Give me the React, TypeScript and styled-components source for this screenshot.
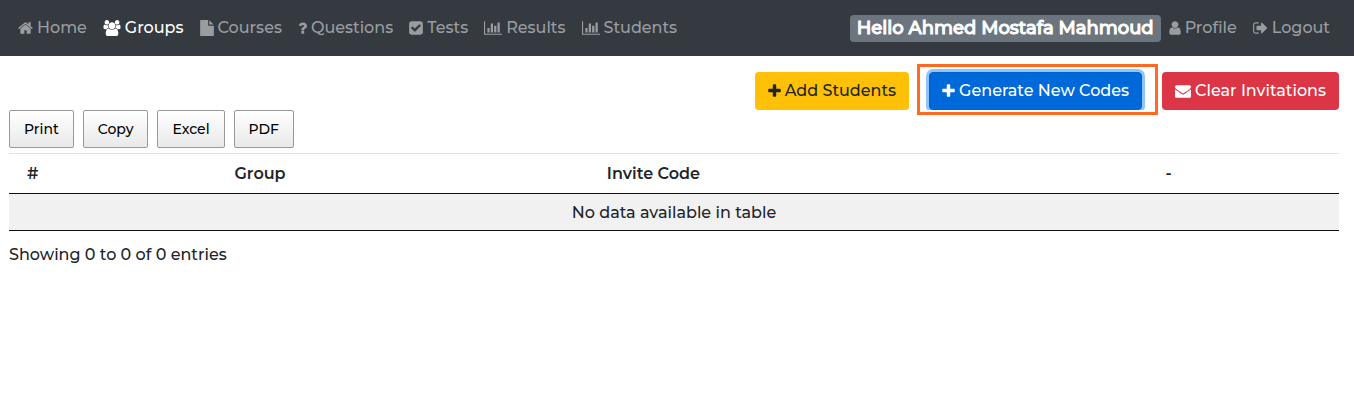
import React from "react";
import styled, { createGlobalStyle, css } from "styled-components";

const GlobalStyle = createGlobalStyle`
  *, *::before, *::after { box-sizing: border-box; }
  body {
    margin: 0;
    background: #fff;
    color: #212529;
    font: 500 16px/24px Montserrat, Inter, "Liberation Sans", sans-serif;
  }
  button { font-family: inherit; cursor: pointer; }
`;

type Glyph = { box: string; width: number; d: string };

const glyphs = {
  home: {
    box: "64 0 1664 1792",
    width: 15,
    d: "M1472 992v480q0 26-19 45t-45 19h-384v-384h-256v384h-384q-26 0-45-19t-19-45v-480q0-1 .5-3t.5-3l575-474 575 474q1 2 1 6zm223-69l-62 74q-8 9-21 11h-3q-13 0-21-7l-692-577-692 577q-12 8-24 7-13-2-21-11l-62-74q-8-10-7-23.5t11-21.5l719-599q32-26 76-26t76 26l244 204v-195q0-14 9-23t23-9h192q14 0 23 9t9 23v408l219 182q10 8 11 21.5t-7 23.5z",
  },
  group: {
    box: "0 0 1920 1792",
    width: 18,
    d: "M593 896q-162 5-265 128H194q-82 0-138-40.5T0 865q0-353 124-353 6 0 43.5 21t97.5 42.5T384 597q67 0 133-23-5 37-5 66 0 139 81 256zm1071 637q0 120-73 189.5t-194 69.5H523q-121 0-194-69.5T256 1533q0-53 3.5-103.5t14-109T300 1212t43-97.5 62-81 85.5-53.5T602 960q10 0 43 21.5t73 48 107 48 135 21.5 135-21.5 107-48 73-48 43-21.5q61 0 111.5 20t85.5 53.5 62 81 43 97.5 26.5 108.5 14 109 3.5 103.5zM640 256q0 106-75 181t-181 75-181-75-75-181 75-181T384 0t181 75 75 181zm704 384q0 159-112.5 271.5T960 1024 688.5 911.5 576 640t112.5-271.5T960 256t271.5 112.5T1344 640zm576 225q0 78-56 118.5t-138 40.5h-134q-103-123-265-128 81-117 81-256 0-29-5-66 66 23 133 23 59 0 119-21.5t97.5-42.5 43.5-21q124 0 124 353zm-128-609q0 106-75 181t-181 75-181-75-75-181 75-181 181-75 181 75 75 181z",
  },
  file: {
    box: "128 0 1536 1792",
    width: 14,
    d: "M1152 512v-472q22 14 36 28l408 408q14 14 28 36h-472zm-128 32q0 40 28 68t68 28h544v1056q0 40-28 68t-68 28h-1344q-40 0-68-28t-28-68v-1600q0-40 28-68t68-28h800v544z",
  },
  question: {
    box: "384 0 1024 1792",
    width: 9,
    d: "M1088 1256v240q0 16-12 28t-28 12h-240q-16 0-28-12t-12-28v-240q0-16 12-28t28-12h240q16 0 28 12t12 28zm316-600q0 54-15.5 101t-35 76.5-55 59.5-57.5 43.5-61 35.5q-41 23-68.5 65t-27.5 67q0 17-12 32.5t-28 15.5h-240q-15 0-25.5-18.5t-10.5-37.5v-45q0-83 65-156.5t143-108.5q59-27 84-56t25-76q0-42-46.5-74t-107.5-32q-65 0-108 29-35 25-107 115-13 16-31 16-12 0-25-8l-164-125q-13-10-15.5-25t5.5-28q160-266 464-266 80 0 161 31t146 83 106 127.5 41 158.5z",
  },
  check: {
    box: "128 0 1536 1792",
    width: 14,
    d: "M813 1299l614-614q19-19 19-45t-19-45l-102-102q-19-19-45-19t-45 19l-467 467-211-211q-19-19-45-19t-45 19l-102 102q-19 19-19 45t19 45l358 358q19 19 45 19t45-19zm851-883v960q0 119-84.5 203.5t-203.5 84.5h-960q-119 0-203.5-84.5t-84.5-203.5v-960q0-119 84.5-203.5t203.5-84.5h960q119 0 203.5 84.5t84.5 203.5z",
  },
  chart: {
    box: "0 0 2048 1792",
    width: 18,
    d: "M640 896v512h-256v-512h256zm384-512v1024h-256v-1024h256zm1024 1152v128h-2048v-1536h128v1408h1920zm-640-896v768h-256v-768h256zm384-384v1152h-256v-1152h256z",
  },
  user: {
    box: "256 0 1280 1792",
    width: 12,
    d: "M1536 1399q0 109-62.5 187t-150.5 78h-854q-88 0-150.5-78t-62.5-187q0-85 8.5-160.5t31.5-152 58.5-131 94-89 134.5-34.5q131 128 313 128t313-128q76 0 134.5 34.5t94 89 58.5 131 31.5 152 8.5 160.5zm-256-887q0 159-112.5 271.5t-271.5 112.5-271.5-112.5-112.5-271.5 112.5-271.5 271.5-112.5 271.5 112.5 112.5 271.5z",
  },
  signOut: {
    box: "64 0 1664 1792",
    width: 15,
    d: "M704 1440q0 4 1 20t.5 26.5-3 23.5-10 19.5-20.5 6.5h-320q-119 0-203.5-84.5t-84.5-203.5v-704q0-119 84.5-203.5t203.5-84.5h320q13 0 22.5 9.5t9.5 22.5q0 4 1 20t.5 26.5-3 23.5-10 19.5-20.5 6.5h-320q-66 0-113 47t-47 113v704q0 66 47 113t113 47h312l11.5 1 11.5 3 8 5.5 7 9 2 13.5zm928-544q0 26-19 45l-544 544q-19 19-45 19t-45-19-19-45v-288h-448q-26 0-45-19t-19-45v-384q0-26 19-45t45-19h448v-288q0-26 19-45t45-19 45 19l544 544q19 19 19 45z",
  },
  plus: {
    box: "192 0 1408 1792",
    width: 13,
    d: "M1600 736v192q0 40-28 68t-68 28h-416v416q0 40-28 68t-68 28h-192q-40 0-68-28t-28-68v-416h-416q-40 0-68-28t-28-68v-192q0-40 28-68t68-28h416v-416q0-40 28-68t68-28h192q40 0 68 28t28 68v416h416q40 0 68 28t28 68z",
  },
  envelope: {
    box: "0 0 1792 1792",
    width: 16,
    d: "M1792 710v794q0 66-47 113t-113 47h-1472q-66 0-113-47t-47-113v-794q44 49 101 87 362 246 497 345 57 42 92.5 65.5t94.5 48 110 24.5h2q51 0 110-24.5t94.5-48 92.5-65.5q170-123 498-345 57-39 100-87zm0-294q0 79-49 151t-122 123q-376 261-468 325-10 7-42.5 31t-54 38.5-52 32.5-57.5 27-50 9h-2q-23 0-50-9t-57.5-27-52-32.5-54-38.5-42.5-31q-91-64-262-182.5t-205-142.5q-62-42-117-115.5t-55-136.5q0-78 41.5-130t118.5-52h1472q65 0 112.5 47t47.5 113z",
  },
} satisfies Record<string, Glyph>;

type GlyphName = keyof typeof glyphs;

const Svg = styled.svg`
  flex: none;
  height: 16px;
  fill: currentColor;
`;

const Icon = ({ name }: { name: GlyphName }) => {
  const { box, width, d } = glyphs[name];
  return (
    <Svg viewBox={box} width={width} aria-hidden="true">
      <path d={d} />
    </Svg>
  );
};

const Navbar = styled.nav`
  display: flex;
  align-items: center;
  justify-content: space-between;
  min-height: 56px;
  padding: 0 16px 0 10px;
  background: #343a40;
`;

const NavGroup = styled.div`
  display: flex;
  align-items: center;
`;

const NavLink = styled.a<{ $active?: boolean }>`
  display: flex;
  align-items: center;
  gap: 4px;
  padding: 8px;
  color: ${(p) => (p.$active ? "#fff" : "#9a9da0")};
  text-decoration: none;
  white-space: nowrap;
`;

const Greeting = styled.span`
  padding: 0 7px;
  border-radius: 4px;
  background: #6c757d;
  color: #fff;
  font-size: 18px;
  line-height: 27px;
  white-space: nowrap;
  -webkit-text-stroke: 1px currentColor;
`;

const Page = styled.main`
  padding: 16px 15px 16px 9px;
`;

const Actions = styled.div`
  display: flex;
  justify-content: flex-end;
  gap: 20px;
`;

const tones = {
  warning: css`
    background: #ffc107;
    color: #212529;
  `,
  primary: css`
    background: #0069d9;
    border-color: #0062cc;
    color: #fff;
    box-shadow: 0 0 0 3px #8fc4fd;
    clip-path: inset(-3px -3px 0 -3px);
  `,
  danger: css`
    background: #dc3545;
    color: #fff;
  `,
};

const ActionButton = styled.button<{ $tone: keyof typeof tones }>`
  display: flex;
  align-items: center;
  gap: 4px;
  padding: 6px 12px;
  border: 1px solid transparent;
  border-radius: 4px;
  font-size: 16px;
  font-weight: 500;
  line-height: 24px;
  white-space: nowrap;
  ${(p) => tones[p.$tone]}
`;

const Highlight = styled.div`
  position: relative;
  &::after {
    content: "";
    position: absolute;
    inset: -8px -16px -5px -12px;
    border: 3px solid #ff6a22;
    pointer-events: none;
  }
`;

const ExportBar = styled.div`
  display: flex;
  gap: 9px;
  margin-bottom: 5px;
`;

const ExportButton = styled.button`
  padding: 6px 14px;
  border: 1px solid #999;
  border-radius: 2px;
  background: linear-gradient(#fff, #e9e9e9);
  color: #000;
  font-size: 14px;
  font-weight: 500;
  line-height: 24px;
`;

const Table = styled.table`
  width: 100%;
  table-layout: fixed;
  border-collapse: separate;
  border-spacing: 0;
  border-bottom: 1px solid #111;
`;

const HeadCell = styled.th<{ $share: number }>`
  width: ${(p) => p.$share}%;
  padding: 8px 18px 7px;
  border-top: 1px solid #dee2e6;
  border-bottom: 1px solid #111;
  font-weight: 600;
  text-align: left;
`;

const EmptyCell = styled.td`
  padding: 7px 10px 5px;
  background: #f1f1f1;
  text-align: center;
`;

const Info = styled.div`
  padding-top: 12px;
`;

const links: { icon: GlyphName; label: string; active?: boolean }[] = [
  { icon: "home", label: "Home" },
  { icon: "group", label: "Groups", active: true },
  { icon: "file", label: "Courses" },
  { icon: "question", label: "Questions" },
  { icon: "check", label: "Tests" },
  { icon: "chart", label: "Results" },
  { icon: "chart", label: "Students" },
];

const columns = [
  { label: "#", share: 15.6 },
  { label: "Group", share: 28 },
  { label: "Invite Code", share: 42 },
  { label: "-", share: 14.4 },
];

export default function App() {
  return (
    <>
      <GlobalStyle />
      <Navbar>
        <NavGroup>
          {links.map((l) => (
            <NavLink key={l.label} href="#" $active={l.active}>
              <Icon name={l.icon} />
              {l.label}
            </NavLink>
          ))}
        </NavGroup>
        <NavGroup>
          <Greeting>Hello Ahmed Mostafa Mahmoud</Greeting>
          <NavLink href="#">
            <Icon name="user" />
            Profile
          </NavLink>
          <NavLink href="#">
            <Icon name="signOut" />
            Logout
          </NavLink>
        </NavGroup>
      </Navbar>
      <Page>
        <Actions>
          <ActionButton type="button" $tone="warning">
            <Icon name="plus" />
            Add Students
          </ActionButton>
          <Highlight>
            <ActionButton type="button" $tone="primary">
              <Icon name="plus" />
              Generate New Codes
            </ActionButton>
          </Highlight>
          <ActionButton type="button" $tone="danger">
            <Icon name="envelope" />
            Clear Invitations
          </ActionButton>
        </Actions>
        <ExportBar>
          {["Print", "Copy", "Excel", "PDF"].map((label) => (
            <ExportButton key={label} type="button">
              {label}
            </ExportButton>
          ))}
        </ExportBar>
        <Table>
          <thead>
            <tr>
              {columns.map((c) => (
                <HeadCell key={c.label} scope="col" $share={c.share}>
                  {c.label}
                </HeadCell>
              ))}
            </tr>
          </thead>
          <tbody>
            <tr>
              <EmptyCell colSpan={4}>No data available in table</EmptyCell>
            </tr>
          </tbody>
        </Table>
        <Info role="status">Showing 0 to 0 of 0 entries</Info>
      </Page>
    </>
  );
}
